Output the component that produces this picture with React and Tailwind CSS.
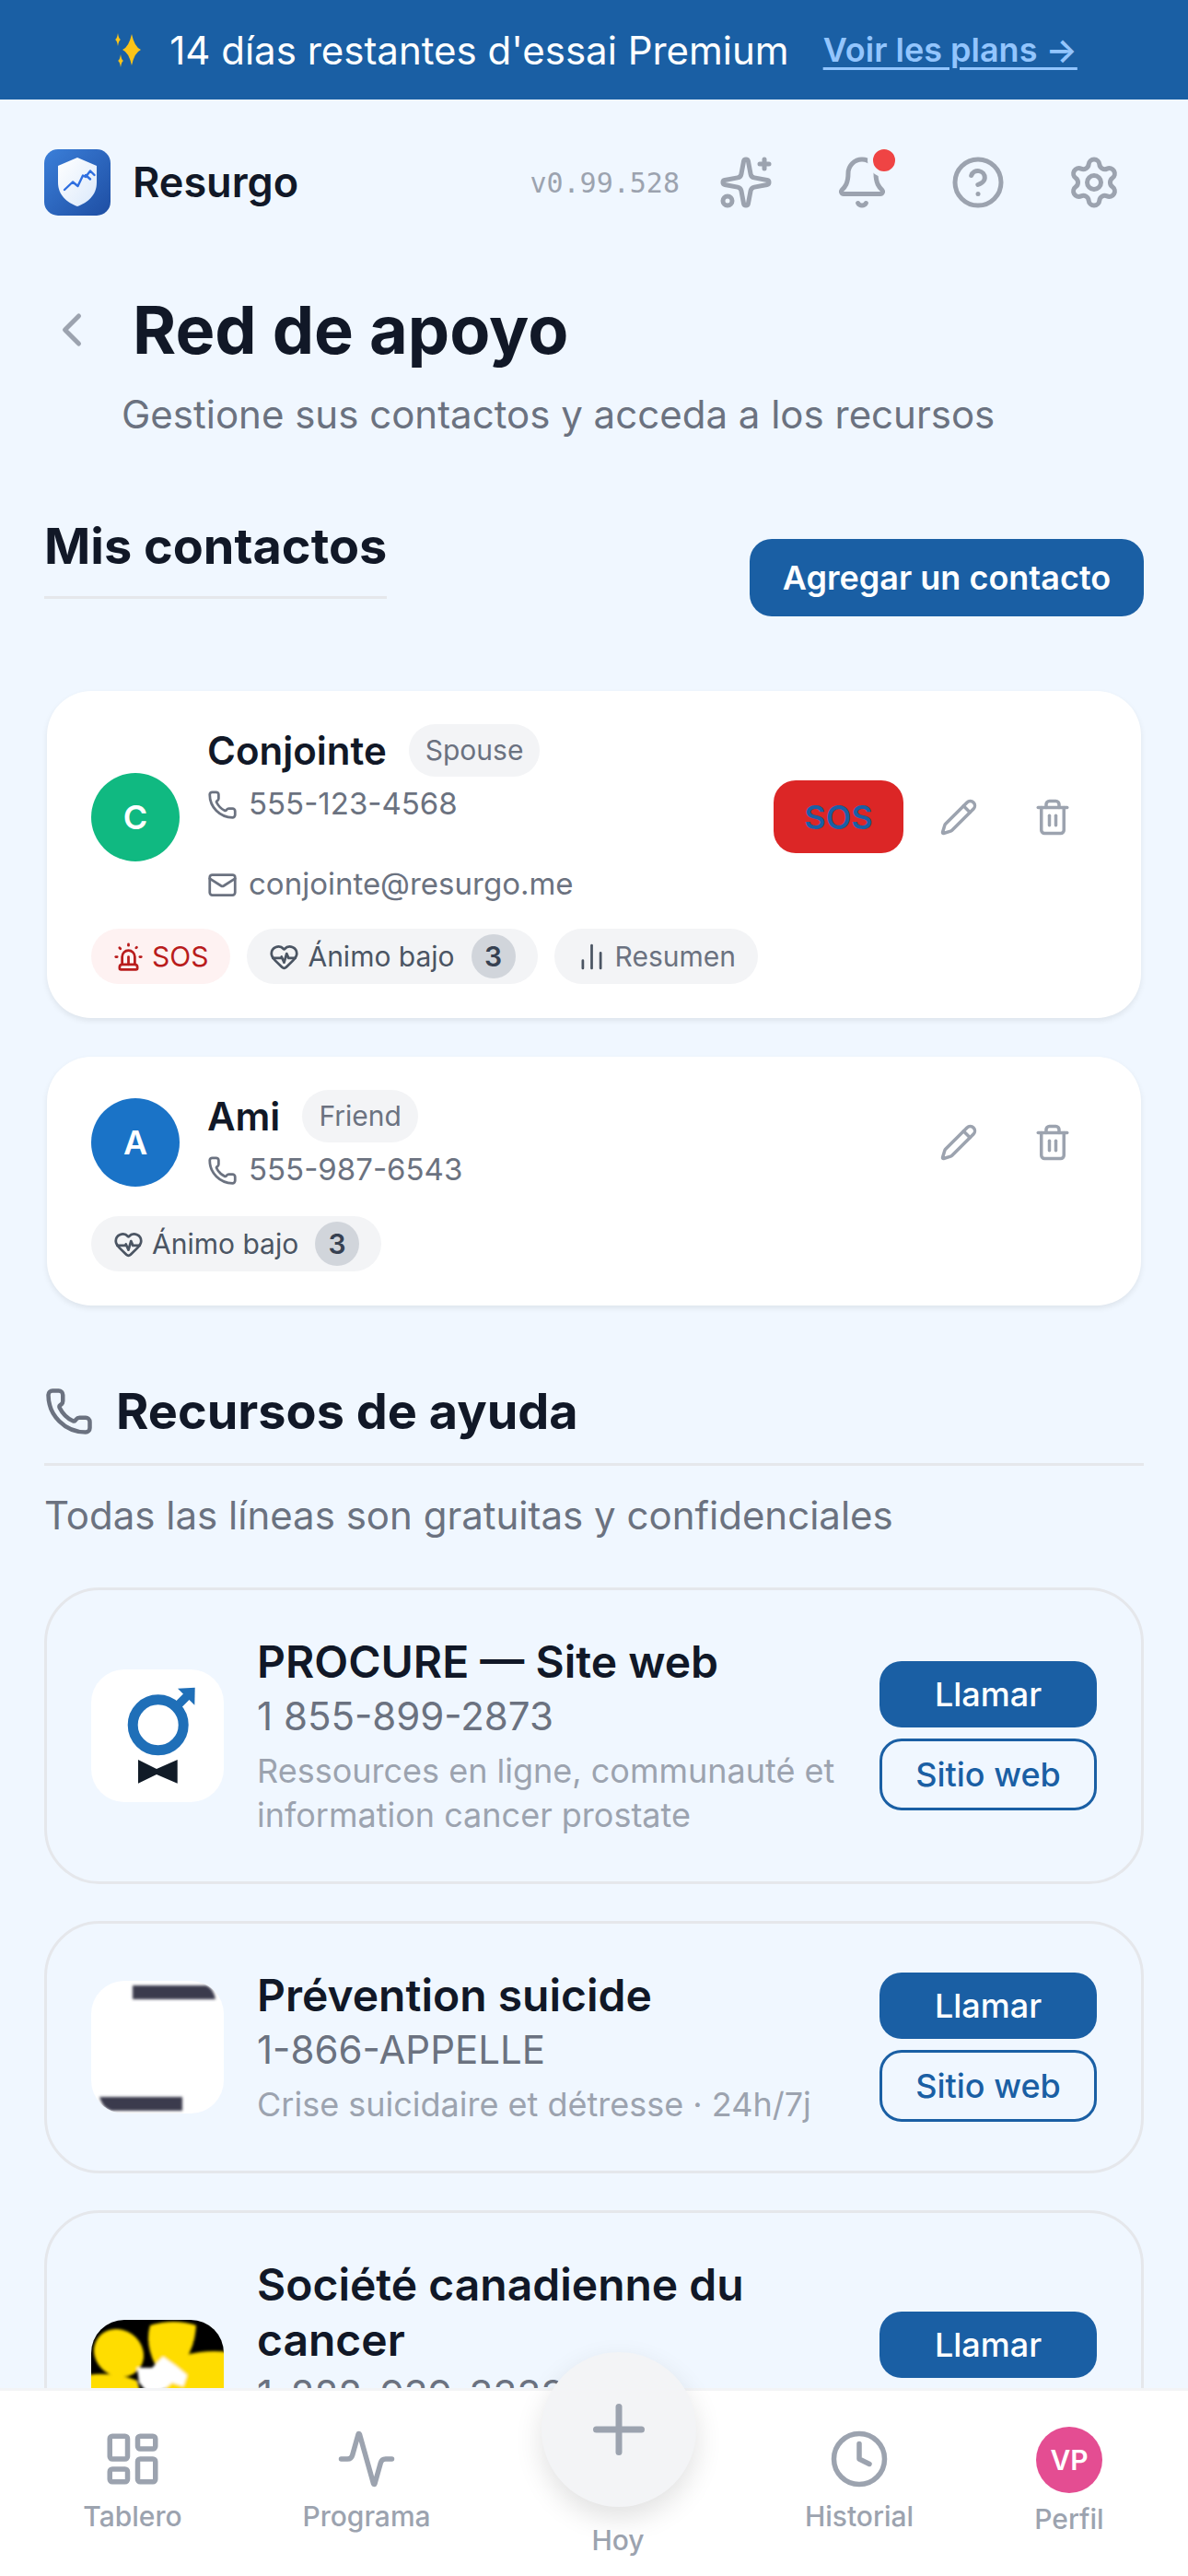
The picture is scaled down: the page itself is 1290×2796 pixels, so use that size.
import React from 'react';
import {
  Activity, Bell, ChartNoAxesColumn, ChevronLeft, CircleHelp, Clock, HeartPulse,
  LayoutDashboard, Mail, Pencil, Phone, Plus, Settings, Siren, Sparkles, Trash2,
} from 'lucide-react';

const Star = ({ cx, cy, r, w }) => (
  <path d={`M${cx} ${cy - r}Q${cx + w * 0.3} ${cy - w * 0.3} ${cx + w} ${cy}Q${cx + w * 0.3} ${cy + w * 0.3} ${cx} ${cy + r}Q${cx - w * 0.3} ${cy + w * 0.3} ${cx - w} ${cy}Q${cx - w * 0.3} ${cy - w * 0.3} ${cx} ${cy - r}Z`} fill="#fcc419" />
);

const ShieldLogo = () => (
  <svg width="72" height="72" viewBox="0 0 72 72" className="shrink-0">
    <defs>
      <linearGradient id="logoBg" x1="0" y1="0" x2="1" y2="1">
        <stop offset="0" stopColor="#3b7fd9" />
        <stop offset="1" stopColor="#1e4ea3" />
      </linearGradient>
      <linearGradient id="logoShield" x1="0" y1="0" x2="1" y2="1">
        <stop offset="0" stopColor="#ffffff" />
        <stop offset="1" stopColor="#dbe9fb" />
      </linearGradient>
    </defs>
    <rect width="72" height="72" rx="15" fill="url(#logoBg)" />
    <path d="M36 9 L57 18 V36 C57 50 47 58 36 62 C25 58 15 50 15 36 V18 Z" fill="url(#logoShield)" />
    <path d="M22 44 L31 35.5 L36.5 40 L42 28.5 L45 30 L50 23.5 L54.5 28 M45 28 L50 32.5" fill="none" stroke="#2f6fe0" strokeWidth="2.4" strokeLinecap="round" strokeLinejoin="round" />
  </svg>
);

const ProcureLogo = () => (
  <svg width="144" height="144" viewBox="0 0 144 144" className="shrink-0">
    <rect width="144" height="144" rx="36" fill="#fff" />
    <circle cx="72.7" cy="60.3" r="27.5" fill="none" stroke="#1f6fb8" strokeWidth="11" />
    <path d="M92 41 L105 28" stroke="#1f6fb8" strokeWidth="9" />
    <path d="M94 20.7 L112.7 19.7 L112.3 38.7 Z" fill="#1f6fb8" />
    <path d="M51 98 L71 108 L93.7 98 V123.7 L71 114 L51 123.7 Z" fill="#111b27" />
  </svg>
);

const PreventionLogo = () => (
  <svg width="144" height="144" viewBox="0 0 144 144" className="shrink-0">
    <defs>
      <filter id="softBar"><feGaussianBlur stdDeviation="1.8" /></filter>
      <clipPath id="prevClip"><rect width="144" height="144" rx="36" /></clipPath>
    </defs>
    <rect width="144" height="144" rx="36" fill="#fff" />
    <g clipPath="url(#prevClip)" filter="url(#softBar)" fill="#3b3b4d">
      <path d="M45 5 H125 Q133 8 135 20 H45 Z" />
      <path d="M9 126 H99 V141 H22 Q12 138 9 126 Z" />
    </g>
  </svg>
);

const CancerLogo = () => (
  <svg width="144" height="144" viewBox="0 0 144 144" className="shrink-0">
    <defs>
      <filter id="softFlower"><feGaussianBlur stdDeviation="1.5" /></filter>
      <clipPath id="cancerClip"><rect width="144" height="144" rx="36" /></clipPath>
    </defs>
    <g clipPath="url(#cancerClip)">
      <rect width="144" height="144" fill="#000" />
      <g filter="url(#softFlower)">
        <ellipse cx="30" cy="36" rx="28" ry="25" transform="rotate(35 30 36)" fill="#ffdd00" />
        <path d="M64 6 Q90 -2 114 6 Q112 36 96 50 L70 50 Q58 26 64 6 Z" fill="#ffdd00" />
        <path d="M104 38 Q124 32 150 35 V144 H80 V60 Z" fill="#ffdd00" />
        <path d="M-4 60 Q24 56 50 66 L70 144 H-4 Z" fill="#ffdd00" />
        <path d="M50 52 L66 52 L78 40 L92 50 L104 60 L100 72 L88 68 L78 76 L62 80 L52 68 Z" fill="#fff" />
      </g>
    </g>
  </svg>
);

const Chip = ({ icon: Icon, label, count, danger }) => (
  <div className={`flex h-[60px] items-center rounded-full pl-[24px] pr-[24px] text-[30px] ${danger ? 'bg-[#fef2f2] text-[#b91c1c]' : 'bg-[#f3f4f6] text-[#4b5563]'}`}>
    <Icon size={33} strokeWidth={2} className="mr-[9px]" />
    <span className={label === 'Resumen' ? 'text-[#6b7280]' : ''}>{label}</span>
    {count && (
      <span className="ml-[18px] flex h-[48px] w-[48px] items-center justify-center rounded-full bg-[#d1d5db] text-[30px] font-semibold text-[#374151]">{count}</span>
    )}
  </div>
);

const ContactLine = ({ icon: Icon, text, className }) => (
  <div className={`flex h-[54px] items-center gap-[12px] text-[33px] text-[#6b7280] ${className || ''}`}>
    <Icon size={33} strokeWidth={2} className="shrink-0" />
    <span>{text}</span>
  </div>
);

const ContactCard = ({ initial, color, name, relation, phone, email, sos, chips }) => (
  <div className="mx-[3px] rounded-[48px] bg-white pb-[37px] pl-[48px] pr-[45px] pt-[36px] shadow-[0_3px_6px_rgba(0,0,0,0.08)]">
    <div className="flex items-center">
      <div className={`flex h-[96px] w-[96px] shrink-0 items-center justify-center rounded-full text-[36px] font-semibold text-white ${color}`}>{initial}</div>
      <div className="ml-[30px] flex-1">
        <div className="flex h-[57px] items-center gap-[24px]">
          <span className="text-[42px] font-semibold text-[#111827]">{name}</span>
          <span className="flex h-[57px] items-center rounded-full bg-[#f3f4f6] px-[18px] text-[30px] text-[#6b7280]">{relation}</span>
        </div>
        <ContactLine icon={Phone} text={phone} className="mt-[3px]" />
        {email && <ContactLine icon={Mail} text={email} className="mt-[33px]" />}
      </div>
      {sos && (
        <button className="flex h-[79px] w-[141px] items-center justify-center rounded-[24px] bg-[#dc2626] text-[36px] font-semibold text-[#1a5fa4]">SOS</button>
      )}
      <button className="ml-[9px] flex h-[102px] w-[102px] items-center justify-center text-[#9ca3af]"><Pencil size={42} strokeWidth={2} /></button>
      <button className="flex h-[102px] w-[102px] items-center justify-center text-[#9ca3af]"><Trash2 size={42} strokeWidth={2} /></button>
    </div>
    <div className={`flex gap-[18px] ${email ? 'mt-[21px]' : 'mt-[23px]'}`}>
      {chips.map((chip) => <Chip key={chip.label} {...chip} />)}
    </div>
  </div>
);

const ResourceCard = ({ logo, title, phone, desc, web }) => (
  <div className="flex items-center rounded-[60px] border-[3px] border-[#e5e7eb] px-[48px] py-[48px]">
    <div className="shrink-0">{logo}</div>
    <div className="ml-[36px] min-w-0 flex-1">
      <div className="text-[48px] font-semibold leading-[60px] text-[#111827]">{title}</div>
      <div className="text-[42px] leading-[58px] text-[#6b7280]">{phone}</div>
      <div className="mt-[6px] text-[36px] leading-[48px] text-[#9ca3af]">{desc}</div>
    </div>
    <div className="ml-[24px] flex w-[236px] shrink-0 flex-col gap-[12px]">
      <button className="h-[72px] rounded-[24px] bg-[#1a5fa4] text-[36px] font-medium text-white">Llamar</button>
      {web && <button className="h-[78px] rounded-[24px] border-[3px] border-[#1a5fa4] text-[36px] font-medium text-[#1a5fa4]">Sitio web</button>}
    </div>
  </div>
);

const NavItem = ({ icon: Icon, label }) => (
  <div className="flex flex-col items-center text-[#9ca3af]">
    <Icon size={66} strokeWidth={2} />
    <span className="mt-[8px] text-[30px] font-medium leading-[42px]">{label}</span>
  </div>
);

const App = () => {
  return (
    <div className="relative flex h-[2796px] w-[1290px] flex-col overflow-hidden bg-[#f0f7ff] font-['Inter',sans-serif]">
      <div className="flex h-[108px] shrink-0 items-center justify-center bg-[#1a5fa4]">
        <svg width="42" height="42" viewBox="0 0 42 42" className="mr-[22px] shrink-0">
          <Star cx={23} cy={21} r={17} w={10} />
          <Star cx={8} cy={10} r={7} w={3} />
          <Star cx={11} cy={33} r={7} w={3} />
        </svg>
        <span className="text-[42px] text-white">14 días restantes d'essai Premium</span>
        <a className="ml-[37px] text-[36px] font-semibold text-[#93c5fd] underline decoration-[3px] underline-offset-[6px]">Voir les plans →</a>
      </div>

      <div className="flex h-[180px] shrink-0 items-center pl-[48px] pr-[72px]">
        <ShieldLogo />
        <span className="ml-[24px] text-[45px] font-semibold text-[#111827]">Resurgo</span>
        <span className="ml-auto font-['DejaVu_Sans_Mono',monospace] text-[30px] text-[#9ca3af]">v0.99.528</span>
        <div className="ml-[42px] flex gap-[66px] text-[#9ca3af]">
          <Sparkles size={60} strokeWidth={2} />
          <div className="relative">
            <Bell size={60} strokeWidth={2} />
            <span className="absolute right-[-12px] top-[-12px] h-[36px] w-[36px] rounded-full border-[6px] border-[#f0f7ff] bg-[#ef4444]" />
          </div>
          <CircleHelp size={60} strokeWidth={2} />
          <Settings size={60} strokeWidth={2} />
        </div>
      </div>

      <div className="min-h-0 flex-1 overflow-hidden px-[48px]">
        <div className="mt-[22px] flex h-[96px] items-center">
          <ChevronLeft size={60} strokeWidth={2} className="text-[#9ca3af]" />
          <h1 className="ml-[36px] text-[72px] font-bold text-[#111827]">Red de apoyo</h1>
        </div>
        <p className="mt-[14px] pl-[84px] text-[42px] leading-[60px] text-[#6b7280]">Gestione sus contactos y acceda a los recursos</p>

        <div className="mt-[77px] flex items-end justify-between">
          <div className="w-[372px] border-b-[3px] border-[#e5e7eb] pb-[18px]">
            <h2 className="whitespace-nowrap text-[54px] font-bold leading-[72px] text-[#111827]">Mis contactos</h2>
          </div>
          <button className="mb-[-19px] flex h-[84px] w-[428px] items-center justify-center rounded-[24px] bg-[#1a5fa4] text-[36px] font-semibold text-white">Agregar un contacto</button>
        </div>

        <div className="mt-[100px] flex flex-col gap-[42px]">
          <ContactCard
            initial="C"
            color="bg-[#10b981]"
            name="Conjointe"
            relation="Spouse"
            phone="555-123-4568"
            email="conjointe@resurgo.me"
            sos
            chips={[
              { icon: Siren, label: 'SOS', danger: true },
              { icon: HeartPulse, label: 'Ánimo bajo', count: '3' },
              { icon: ChartNoAxesColumn, label: 'Resumen' },
            ]}
          />
          <ContactCard
            initial="A"
            color="bg-[#1a73c7]"
            name="Ami"
            relation="Friend"
            phone="555-987-6543"
            chips={[{ icon: HeartPulse, label: 'Ánimo bajo', count: '3' }]}
          />
        </div>

        <div className="mt-[82px] flex items-center border-b-[3px] border-[#e5e7eb] pb-[23px]">
          <Phone size={54} strokeWidth={2} className="text-[#6b7280]" />
          <h2 className="ml-[24px] text-[54px] font-bold leading-[66px] text-[#111827]">Recursos de ayuda</h2>
        </div>
        <p className="mt-[24px] text-[42px] leading-[60px] text-[#6b7280]">Todas las líneas son gratuitas y confidenciales</p>

        <div className="mt-[48px] flex flex-col gap-[40px]">
          <ResourceCard
            logo={<ProcureLogo />}
            title="PROCURE — Site web"
            phone="1 855-899-2873"
            desc="Ressources en ligne, communauté et information cancer prostate"
            web
          />
          <ResourceCard
            logo={<PreventionLogo />}
            title="Prévention suicide"
            phone="1-866-APPELLE"
            desc="Crise suicidaire et détresse · 24h/7j"
            web
          />
          <ResourceCard
            logo={<CancerLogo />}
            title="Société canadienne du cancer"
            phone="1-888-939-3333"
            desc="Soutien, information et ressources pour le cancer"
            web
          />
        </div>
      </div>

      <div className="relative grid h-[204px] shrink-0 grid-cols-[288px_220px_326px_198px_258px] border-t-[3px] border-[#f3f4f6] bg-white pt-[41px]">
        <NavItem icon={LayoutDashboard} label="Tablero" />
        <NavItem icon={Activity} label="Programa" />
        <div className="flex flex-col items-center justify-end pb-[18px]">
          <span className="text-[30px] font-medium leading-[42px] text-[#9ca3af]">Hoy</span>
        </div>
        <NavItem icon={Clock} label="Historial" />
        <div className="flex flex-col items-center">
          <div className="mt-[-2px] flex h-[72px] w-[72px] items-center justify-center rounded-full bg-[#e44d92] text-[30px] font-semibold text-white">VP</div>
          <span className="mt-[7px] text-[30px] font-medium leading-[42px] text-[#9ca3af]">Perfil</span>
        </div>
        <div className="absolute left-[588px] top-[-42px] flex h-[168px] w-[168px] items-center justify-center rounded-full bg-[#f3f4f6] shadow-[0_12px_30px_rgba(0,0,0,0.12)]">
          <Plus size={84} strokeWidth={2} className="text-[#9ca3af]" />
        </div>
      </div>
    </div>
  );
};

export default App;
